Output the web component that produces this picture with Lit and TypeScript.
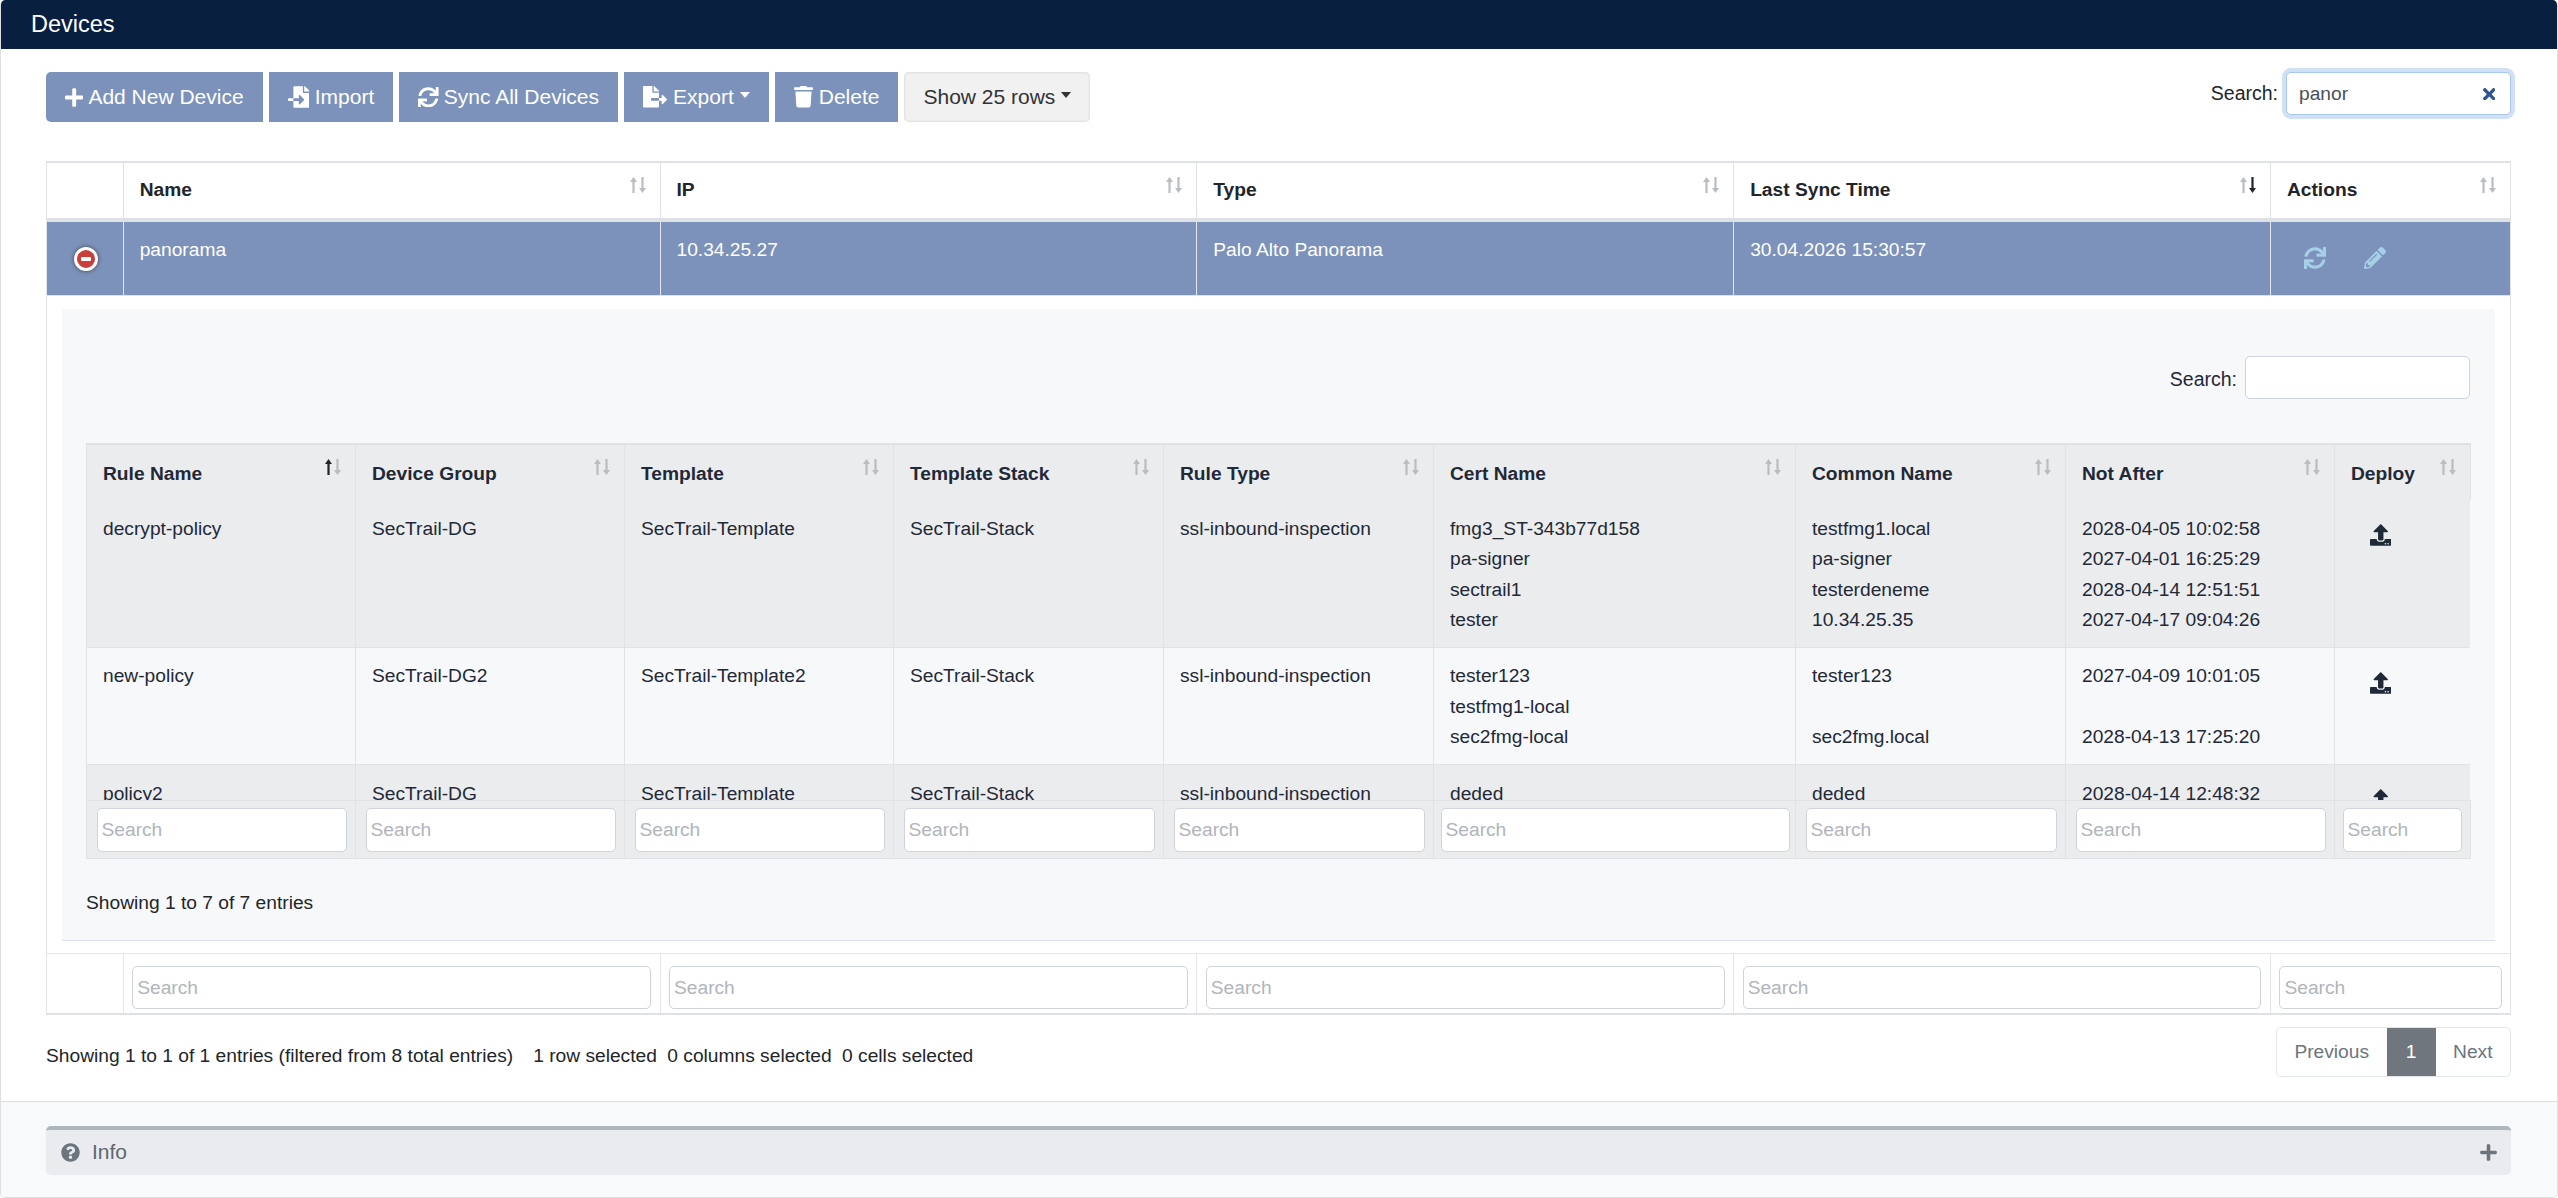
import { LitElement, html, css, svg } from "lit";
import { customElement } from "lit/decorators.js";

const P = {
  plus: ["0 0 448 512", "M416 208H272V64c0-17.67-14.33-32-32-32h-32c-17.67 0-32 14.33-32 32v144H32c-17.67 0-32 14.33-32 32v32c0 17.67 14.33 32 32 32h144v144c0 17.67 14.33 32 32 32h32c17.67 0 32-14.33 32-32V304h144c17.67 0 32-14.33 32-32v-32c0-17.67-14.33-32-32-32z"],
  sync: ["0 0 512 512", "M440.65 12.57l4 82.77A247.16 247.16 0 0 0 255.83 8C134.73 8 33.91 94.92 12.29 209.82A12 12 0 0 0 24.09 224h49.05a12 12 0 0 0 11.67-9.26 175.91 175.91 0 0 1 317-56.94l-101.46-4.86a12 12 0 0 0-12.57 12v47.41a12 12 0 0 0 12 12H500a12 12 0 0 0 12-12V12a12 12 0 0 0-12-12h-47.37a12 12 0 0 0-11.98 12.57zM255.83 432a175.61 175.61 0 0 1-146-77.8l101.8 4.87a12 12 0 0 0 12.57-12v-47.4a12 12 0 0 0-12-12H12a12 12 0 0 0-12 12V500a12 12 0 0 0 12 12h47.35a12 12 0 0 0 12-12.6l-4.15-82.57A247.17 247.17 0 0 0 255.83 504c121.11 0 221.93-86.92 243.55-201.82a12 12 0 0 0-11.8-14.18h-49.05a12 12 0 0 0-11.67 9.26A175.86 175.86 0 0 1 255.83 432z"],
  fileImport: ["0 0 512 512", "M16 288c-8.8 0-16 7.2-16 16v32c0 8.8 7.2 16 16 16h112v-64zm489-183L407.1 7c-4.5-4.5-10.6-7-17-7H384v128h128v-6.1c0-6.3-2.5-12.4-7-16.9zm-153 31V0H152c-13.3 0-24 10.7-24 24v264h128v-65.2c0-14.3 17.3-21.4 27.4-11.3L379 308c6.6 6.7 6.6 17.4 0 24l-95.7 96.4c-10.1 10.1-27.4 3-27.4-11.3V352H128v136c0 13.3 10.7 24 24 24h336c13.3 0 24-10.7 24-24V160H376c-13.2 0-24-10.8-24-24z"],
  fileExport: ["0 0 576 512", "M384 121.9c0-6.3-2.5-12.4-7-16.9L279.1 7c-4.5-4.5-10.6-7-17-7H256v128h128zM571 308l-95.7-96.4c-10.1-10.1-27.4-3-27.4 11.3V288h-64v64h64v65.2c0 14.3 17.3 21.4 27.4 11.3L571 332c6.6-6.6 6.6-17.4 0-24zm-379 28v-32c0-8.8 7.2-16 16-16h176V160H248c-13.2 0-24-10.8-24-24V0H24C10.7 0 0 10.7 0 24v464c0 13.3 10.7 24 24 24h336c13.3 0 24-10.7 24-24V352H208c-8.8 0-16-7.2-16-16z"],
  trash: ["0 0 448 512", "M432 32H312l-9.4-18.7A24 24 0 0 0 281.1 0H166.8a23.72 23.72 0 0 0-21.4 13.3L136 32H16A16 16 0 0 0 0 48v32a16 16 0 0 0 16 16h416a16 16 0 0 0 16-16V48a16 16 0 0 0-16-16zM53.2 467a48 48 0 0 0 47.9 45h245.8a48 48 0 0 0 47.9-45L416 128H32z"],
  pencil: ["0 0 512 512", "M497.9 142.1l-46.1 46.1c-4.7 4.7-12.3 4.7-17 0l-111-111c-4.7-4.7-4.7-12.3 0-17l46.1-46.1c18.7-18.7 49.1-18.7 67.9 0l60.1 60.1c18.8 18.7 18.8 49.1 0 67.9zM284.2 99.8L21.6 362.4.4 483.9c-2.9 16.4 11.4 30.6 27.8 27.8l121.5-21.3 262.6-262.6c4.7-4.7 4.7-12.3 0-17l-111-111c-4.8-4.7-12.4-4.7-17.1 0zM124.1 339.9c-5.5-5.5-5.5-14.3 0-19.8l154-154c5.5-5.5 14.3-5.5 19.8 0s5.5 14.3 0 19.8l-154 154c-5.5 5.5-14.3 5.5-19.8 0zM88 424h48v36.3l-64.5 11.3-31.1-31.1L51.7 376H88v48z"],
  question: ["0 0 512 512", "M504 256c0 136.997-111.043 248-248 248S8 392.997 8 256C8 119.083 119.043 8 256 8s248 111.083 248 248zM262.655 90c-54.497 0-89.255 22.957-116.549 63.758-3.536 5.286-2.353 12.415 2.715 16.258l34.699 26.31c5.205 3.947 12.621 3.008 16.665-2.122 17.864-22.658 30.113-35.797 57.303-35.797 20.429 0 45.698 13.148 45.698 32.958 0 14.976-12.363 22.667-32.534 33.976C247.128 238.528 216 254.941 216 296v4c0 6.627 5.373 12 12 12h56c6.627 0 12-5.373 12-12v-1.333c0-28.462 83.186-29.647 83.186-106.667 0-58.002-60.165-102-116.531-102zM256 338c-25.365 0-46 20.635-46 46 0 25.364 20.635 46 46 46s46-20.636 46-46c0-25.365-20.635-46-46-46z"],
  upload: ["0 0 512 512", "M296 384h-80c-13.3 0-24-10.7-24-24V192h-87.7c-17.8 0-26.7-21.5-14.1-34.1L242.3 5.7c7.5-7.5 19.8-7.5 27.3 0l152.2 152.2c12.6 12.6 3.7 34.1-14.1 34.1H320v168c0 13.3-10.7 24-24 24zm216-8v112c0 13.3-10.7 24-24 24H24c-13.3 0-24-10.7-24-24V376c0-13.3 10.7-24 24-24h136v8c0 30.9 25.1 56 56 56h80c30.9 0 56-25.1 56-56v-8h136c13.3 0 24 10.7 24 24zm-124 88c0-11-9-20-20-20s-20 9-20 20 9 20 20 20 20-9 20-20zm64 0c0-11-9-20-20-20s-20 9-20 20 9 20 20 20 20-9 20-20z"],
  times: ["0 80 352 352", "M242.72 256l100.07-100.07c12.28-12.28 12.28-32.19 0-44.48l-22.24-22.24c-12.28-12.28-32.19-12.28-44.48 0L176 189.28 75.93 89.21c-12.28-12.28-32.19-12.28-44.48 0L9.21 111.45c-12.28 12.28-12.28 32.19 0 44.48L109.28 256 9.21 356.07c-12.28 12.28-12.28 32.19 0 44.48l22.24 22.24c12.28 12.28 32.2 12.28 44.48 0L176 322.72l100.07 100.07c12.28 12.28 32.2 12.28 44.48 0l22.24-22.24c12.28-12.28 12.28-32.19 0-44.48L242.72 256z"],
};

const icon = (k: keyof typeof P, cls: string) =>
  html`<svg class=${cls} viewBox=${P[k][0]} fill="currentColor"><path d=${P[k][1]}></path></svg>`;

const sort = (active?: "up" | "down") => html`<svg class="sort" viewBox="0 0 18 16">
  ${svg`<path class=${active === "up" ? "on" : ""} d="M4.5 0 L8 5 H5.6 V16 H3.4 V5 H1 Z"></path>
  <path class=${active === "down" ? "on" : ""} d="M13.5 16 L10 11 H12.4 V0 H14.6 V11 H17 Z"></path>`}
</svg>`;

const rows = [
  ["decrypt-policy", "SecTrail-DG", "SecTrail-Template", "SecTrail-Stack", "ssl-inbound-inspection",
    ["fmg3_ST-343b77d158", "pa-signer", "sectrail1", "tester"],
    ["testfmg1.local", "pa-signer", "testerdeneme", "10.34.25.35"],
    ["2028-04-05 10:02:58", "2027-04-01 16:25:29", "2028-04-14 12:51:51", "2027-04-17 09:04:26"]],
  ["new-policy", "SecTrail-DG2", "SecTrail-Template2", "SecTrail-Stack", "ssl-inbound-inspection",
    ["tester123", "testfmg1-local", "sec2fmg-local"],
    ["tester123", "", "sec2fmg.local"],
    ["2027-04-09 10:01:05", "", "2028-04-13 17:25:20"]],
  ["policy2", "SecTrail-DG", "SecTrail-Template", "SecTrail-Stack", "ssl-inbound-inspection",
    ["deded"], ["deded"], ["2028-04-14 12:48:32"]],
] as (string | string[])[][];

const childCols = ["Rule Name", "Device Group", "Template", "Template Stack", "Rule Type", "Cert Name", "Common Name", "Not After", "Deploy"];

@customElement("app-root")
export class AppRoot extends LitElement {
  static styles = css`
    :host { display: block; width: 100%; font-family: "Liberation Sans", Arial, sans-serif; font-size: 19.2px; line-height: 28.8px; color: #212529; }
    * { box-sizing: border-box; }
    .card { height: 1198px; border: 1px solid #dcdfe3; border-top: 0; border-radius: 5px; overflow: hidden; display: flex; flex-direction: column; background: #fff; }
    .title { height: 49px; margin: 0 -1px; padding: 0 0 0 31px; background: #081f40; color: #fff; font-size: 23.5px; line-height: 48px; border-radius: 5px 5px 0 0; flex: none; }
    .body { flex: none; height: 1053px; padding: 23px 46px 0 45px; border-bottom: 1px solid #dcdfe3; }
    .toolbar { display: flex; justify-content: space-between; align-items: flex-start; height: 89px; }
    .btns { display: flex; gap: 6px; }
    .btn { display: inline-flex; align-items: center; height: 50px; padding: 0 19px; background: #7c92ba; color: #fff; font-size: 21px; line-height: 50px; }
    .btn.first { border-radius: 5px 0 0 5px; }
    .btn.gray { background: #f1f1f1; color: #333; box-shadow: inset 0 0 0 1.5px #e4e4e4; border-radius: 5px; }
    .caret { width: 0; height: 0; border-left: 5.5px solid transparent; border-right: 5.5px solid transparent; border-top: 6px solid currentColor; margin-left: 6px; margin-top: -4px; }
    .i-plus { width: 18.4px; height: 21px; margin-right: 5px; }
    .i-import { width: 21.6px; height: 22px; margin-right: 5.5px; }
    .i-sync { width: 20.6px; height: 20.6px; margin-right: 5px; }
    .i-export { width: 24px; height: 21.5px; margin-right: 6px; }
    .i-trash { width: 19px; height: 21.5px; margin-right: 6px; }
    .search { display: flex; align-items: center; gap: 8px; color: #212529; font-size: 19.5px; }
    .clearable { position: relative; display: block; font-size: 19.2px; }
    input { display: block; width: 100%; font: inherit; font-size: 19.2px; color: #495057; border: 1.5px solid #ced4da; border-radius: 5px; background: #fff; outline: 0; height: 44px; padding: 0 4px; }
    input::placeholder { color: #b0b5bb; opacity: 1; }
    .clearable input { width: 225px; height: 43px; padding: 0 36px 0 12px; border-color: #a8c7ec; box-shadow: 0 0 0 4px #d0e0f5; }
    .i-x { position: absolute; right: 16px; top: 15.5px; width: 12.5px; height: 12.5px; color: #2f5597; }

    table { border-collapse: separate; border-spacing: 0; table-layout: fixed; }
    .main { width: 2465px; }
    .main > thead th { position: relative; height: 61px; padding: 13px 16px 0; vertical-align: top; text-align: left; font-weight: 700; color: #212529; background: #fff; border-top: 2px solid #dee2e6; border-bottom: 4px solid #dee2e6; border-left: 1px solid #dee2e6; }
    .main > thead th:last-child, .main > tbody > tr > td:last-child { border-right: 1px solid #dee2e6; }
    .main > thead th:nth-child(1) { width: 76.7px; }
    .main > thead th:nth-child(n+2) { width: 536.8px; }
    .main > thead th:last-child { width: 241px; }
    .sort { position: absolute; right: 13px; top: 14px; width: 18px; height: 16px; }
    .sort path { fill: #b9bdc2; }
    .sort path.on { fill: #212529; }
    .selected td { height: 74px; padding: 13.6px 16px 0; vertical-align: top; background: #7c92ba; color: #fff; border-left: 1px solid #e3e6ec; border-bottom: 1px solid #dee2e6; }
    .minus { display: flex; align-items: center; justify-content: center; width: 24px; height: 24px; margin: 25px 0 0 26.5px; border-radius: 50%; background: #c93f3b; border: 3px solid #fff; box-shadow: 0 0 4px #444; }
    .minus::before { content: ""; width: 10px; height: 4px; border-radius: 1px; background: #fff; }
    .selected td.ctl { padding: 0; }
    .actions { display: flex; gap: 38px; padding: 24.7px 0 0 33px; color: #a6cfe8; }
    .i-act { width: 22px; height: 22px; }
    td.childcell { padding: 13px 15px 12px 15px; border-left: 1px solid #dee2e6; background: #fff; }
    .child { height: 632px; padding: 47px 25px 0 24px; background: #f7f8fa; border-bottom: 1px solid #dee2e6; color: #1f2937; }
    .child .search { justify-content: flex-end; height: 43px; margin-bottom: 44px; color: #1f2937; }
    .child .search span { padding-top: 3px; }
    .child .search input { width: 225px; height: 43px; }
    .ct { width: 2385px; }
    .ct th, .ct td { border-left: 1px solid #e0e2e6; vertical-align: top; text-align: left; padding: 13.5px 16px 11.5px; line-height: 30.4px; }
    .ct tr > :last-child { border-right: 1px solid #e0e2e6; }
    .ct tr > :nth-child(1), .ct tr > :nth-child(2), .ct tr > :nth-child(3), .ct tr > :nth-child(8) { width: 269px; }
    .ct tr > :nth-child(4), .ct tr > :nth-child(5), .ct tr > :nth-child(7) { width: 270px; }
    .ct tr > :nth-child(6) { width: 362px; }
    .ct tr > :nth-child(9) { width: 137px; }
    .head th { position: relative; height: 57px; padding-top: 13.5px; font-weight: 700; background: #ebecee; border-top: 2px solid #dee2e6; color: #1f2937; }
    .scroll { height: 300px; overflow: hidden; }
    .scroll td { border-bottom: 1px solid #e0e2e6; }
    .scroll tr:nth-child(odd) td { background: #ebecee; }
    .line { display: block; height: 30.4px; white-space: nowrap; }
    .i-up { display: block; width: 21.5px; height: 22px; margin: 10.5px 0 0 18.5px; color: #1f2937; }
    .foot td { height: 59px; padding: 7px 8.5px 0 9.5px; background: #ebecee; border-top: 1px solid #e0e2e6; border-bottom: 1px solid #dee2e6; }
    .foot td:nth-child(6) { padding-left: 6.5px; padding-right: 5.5px; }
    .foot td:last-child { padding-left: 7.5px; }
    .child-info { margin-top: 29.5px; color: #212529; }

    .main .filters td { height: 62px; padding: 8px 8.5px 0 8.5px; border-top: 1px solid #e2e5e9; border-left: 1px solid #e2e5e9; border-bottom: 2px solid #dee2e6; }
    .main .filters td:last-child { padding-right: 8px; }
    .main .filters input { height: 43px; }
    .under { display: flex; justify-content: space-between; align-items: flex-start; padding-top: 12px; }
    .info { padding-top: 15px; white-space: nowrap; }
    .info span { margin-left: 10.5px; }
    .info span.r { margin-left: 20px; }
    .pager { display: flex; height: 50px; border: 1.5px solid #e2e5e9; border-radius: 5px; color: #6c757d; line-height: 47px; overflow: hidden; }
    .pager div { padding: 0 17.5px; }
    .pager .on { background: #6f767d; color: #fff; margin: -1.5px 0; line-height: 50px; width: 49px; padding: 0; text-align: center; }
    .bottom { flex: 1; background: #f8f9fa; padding: 24px 46px 0 45px; }
    .panel { display: flex; align-items: center; height: 49px; padding: 0 14px 0 15px; background: #eaebef; border-top: 4px solid #adb5bd; border-radius: 5px; color: #5f666d; font-size: 21px; }
    .i-q { width: 19px; height: 19px; color: #6c757d; margin-right: 12px; }
    .panel .t { flex: 1; }
    .i-p { width: 17px; height: 19px; color: #6c757d; }
  `;

  private filterInput() {
    return html`<input placeholder="Search" />`;
  }

  private childTable() {
    return html`
      <table class="ct head">
        <thead><tr>${childCols.map((c, i) => html`<th>${c}${sort(i === 0 ? "up" : undefined)}</th>`)}</tr></thead>
      </table>
      <div class="scroll">
        <table class="ct">
          <tbody>
            ${rows.map((r) => html`<tr>
              ${r.map((c) => html`<td>${Array.isArray(c) ? c.map((l) => html`<span class="line">${l}</span>`) : c}</td>`)}
              <td>${icon("upload", "i-up")}</td>
            </tr>`)}
          </tbody>
        </table>
      </div>
      <table class="ct foot">
        <tbody><tr>${childCols.map(() => html`<td>${this.filterInput()}</td>`)}</tr></tbody>
      </table>
      <div class="child-info">Showing 1 to 7 of 7 entries</div>
    `;
  }

  render() {
    return html`
      <div class="card">
        <div class="title">Devices</div>
        <div class="body">
          <div class="toolbar">
            <div class="btns">
              <div class="btn first">${icon("plus", "i-plus")}Add New Device</div>
              <div class="btn">${icon("fileImport", "i-import")}Import</div>
              <div class="btn">${icon("sync", "i-sync")}Sync All Devices</div>
              <div class="btn">${icon("fileExport", "i-export")}Export<span class="caret"></span></div>
              <div class="btn">${icon("trash", "i-trash")}Delete</div>
              <div class="btn gray">Show 25 rows<span class="caret"></span></div>
            </div>
            <div class="search">
              <span>Search:</span>
              <div class="clearable"><input value="panor" />${icon("times", "i-x")}</div>
            </div>
          </div>
          <table class="main">
            <thead>
              <tr>
                <th></th>
                <th>Name${sort()}</th>
                <th>IP${sort()}</th>
                <th>Type${sort()}</th>
                <th>Last Sync Time${sort("down")}</th>
                <th>Actions${sort()}</th>
              </tr>
            </thead>
            <tbody>
              <tr class="selected">
                <td class="ctl"><div class="minus"></div></td>
                <td>panorama</td>
                <td>10.34.25.27</td>
                <td>Palo Alto Panorama</td>
                <td>30.04.2026 15:30:57</td>
                <td class="ctl"><div class="actions">${icon("sync", "i-act")}${icon("pencil", "i-act")}</div></td>
              </tr>
              <tr>
                <td class="childcell" colspan="6">
                  <div class="child">
                    <div class="search"><span>Search:</span><div><input /></div></div>
                    ${this.childTable()}
                  </div>
                </td>
              </tr>
              <tr class="filters">
                <td></td>
                <td>${this.filterInput()}</td>
                <td>${this.filterInput()}</td>
                <td>${this.filterInput()}</td>
                <td>${this.filterInput()}</td>
                <td>${this.filterInput()}</td>
              </tr>
            </tbody>
          </table>
          <div class="under">
            <div class="info">Showing 1 to 1 of 1 entries (filtered from 8 total entries)<span class="r">1 row selected</span><span>0 columns selected</span><span>0 cells selected</span></div>
            <div class="pager"><div>Previous</div><div class="on">1</div><div>Next</div></div>
          </div>
        </div>
        <div class="bottom">
          <div class="panel">${icon("question", "i-q")}<span class="t">Info</span>${icon("plus", "i-p")}</div>
        </div>
      </div>
    `;
  }
}
